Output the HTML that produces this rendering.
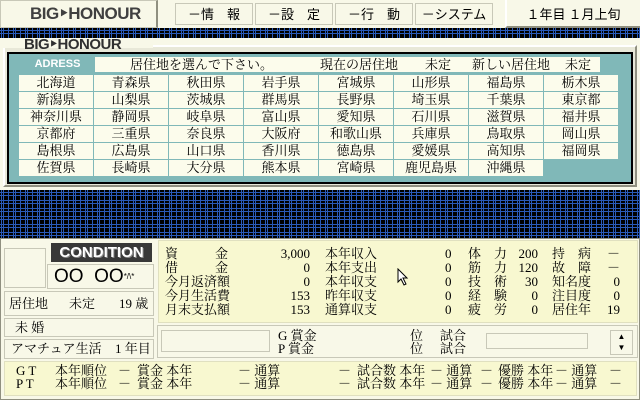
<!DOCTYPE html><html><head><meta charset="utf-8"><style>
*{margin:0;padding:0;box-sizing:border-box}
body{width:640px;height:400px;overflow:hidden;background:#f8f8e8;font-family:"Liberation Serif","Noto Serif CJK SC","Noto Sans CJK JP",serif;font-size:13px;color:#000;position:relative}
.a{position:absolute}
.btn{position:absolute;border:1px solid #c8c8b8;background:#f8f8e8;font-family:"Noto Sans CJK JP",sans-serif;font-size:13px;line-height:20px;text-align:center}
.logo{font-family:"Liberation Sans",sans-serif;font-weight:bold;color:#404040;letter-spacing:-0.5px}
.cell{position:absolute;width:74px;height:16px;background:#fcfcec;text-align:center;line-height:16px;font-size:13px}
.row{position:absolute;line-height:14px;font-size:13px;white-space:nowrap}
.r{text-align:right}
.box{position:absolute;border:1px solid #c8c8b8}
</style></head><body>
<svg width="0" height="0" style="position:absolute"><defs><pattern id="p" width="12" height="8" patternUnits="userSpaceOnUse"><rect width="12" height="8" fill="#000"/><path d="M1.5 0V8M3.5 0V8M8.5 0V8M0 2.5H12M0 5.5H12" stroke="#2a5ab8" stroke-width="1"/></pattern></defs></svg>
<svg class="a" style="left:0;top:28px" width="640" height="10"><rect width="640" height="10" fill="url(#p)"/></svg>
<svg class="a" style="left:0;top:190px" width="640" height="48"><rect width="640" height="48" fill="url(#p)"/></svg>
<!-- top bar -->
<div class="a" style="left:0;top:0;width:158px;height:28px;border:1px solid #c8c8b8;border-right:2px solid #909080"></div>
<div class="a logo" style="left:30px;top:4px;font-size:17px">BIG‣HONOUR</div>
<div class="btn" style="left:175px;top:3px;width:78px">－情　報</div>
<div class="btn" style="left:255px;top:3px;width:78px">－設　定</div>
<div class="btn" style="left:335px;top:3px;width:78px">－行　動</div>
<div class="btn" style="left:415px;top:3px;width:78px">－システム</div>
<div class="a" style="left:505px;top:0;width:135px;height:28px;border-left:2px solid #fff;border-bottom:2px solid #909080;font-size:13px;line-height:28px;text-align:center;font-family:'Noto Sans CJK JP',sans-serif">１年目 １月上旬</div>
<!-- dialog -->
<div class="a" style="left:0;top:38px;width:640px;height:152px;background:#f8f8e8"></div>
<div class="a" style="left:3px;top:45px;width:634px;height:142px;border:2px solid #909080;border-top-color:#fff;border-left-color:#fff;background:#e8e8d8"></div>
<div class="a" style="left:3px;top:38px;width:150px;height:10px;background:#f8f8e8"></div>
<div class="a logo" style="left:24px;top:37px;font-size:15px;color:#303030;line-height:16px">BIG‣HONOUR</div>
<div class="a" style="left:7px;top:52px;width:626px;height:132px;border:2px solid #000;background:#80b8b8"></div>
<div class="a" style="left:20px;top:57px;width:75px;height:15px;color:#fff;font-family:'Liberation Sans',sans-serif;font-weight:bold;font-size:11px;line-height:15px;text-align:center">ADRESS</div>
<div class="a" style="left:95px;top:57px;width:505px;height:15px;background:#fcfcec;line-height:15px;font-size:13px">
<span class="a" style="left:35px">居住地を選んで下さい。</span><span class="a" style="left:225px">現在の居住地</span><span class="a" style="left:330px">未定</span><span class="a" style="left:377px">新しい居住地</span><span class="a" style="left:470px">未定</span></div>
<div class="a" style="left:19px;top:75px">
<div class="cell" style="left:0;top:0">北海道</div><div class="cell" style="left:75px;top:0">青森県</div><div class="cell" style="left:150px;top:0">秋田県</div><div class="cell" style="left:225px;top:0">岩手県</div><div class="cell" style="left:300px;top:0">宮城県</div><div class="cell" style="left:375px;top:0">山形県</div><div class="cell" style="left:450px;top:0">福島県</div><div class="cell" style="left:525px;top:0">栃木県</div>
<div class="cell" style="left:0;top:17px">新潟県</div><div class="cell" style="left:75px;top:17px">山梨県</div><div class="cell" style="left:150px;top:17px">茨城県</div><div class="cell" style="left:225px;top:17px">群馬県</div><div class="cell" style="left:300px;top:17px">長野県</div><div class="cell" style="left:375px;top:17px">埼玉県</div><div class="cell" style="left:450px;top:17px">千葉県</div><div class="cell" style="left:525px;top:17px">東京都</div>
<div class="cell" style="left:0;top:34px">神奈川県</div><div class="cell" style="left:75px;top:34px">静岡県</div><div class="cell" style="left:150px;top:34px">岐阜県</div><div class="cell" style="left:225px;top:34px">富山県</div><div class="cell" style="left:300px;top:34px">愛知県</div><div class="cell" style="left:375px;top:34px">石川県</div><div class="cell" style="left:450px;top:34px">滋賀県</div><div class="cell" style="left:525px;top:34px">福井県</div>
<div class="cell" style="left:0;top:51px">京都府</div><div class="cell" style="left:75px;top:51px">三重県</div><div class="cell" style="left:150px;top:51px">奈良県</div><div class="cell" style="left:225px;top:51px">大阪府</div><div class="cell" style="left:300px;top:51px">和歌山県</div><div class="cell" style="left:375px;top:51px">兵庫県</div><div class="cell" style="left:450px;top:51px">鳥取県</div><div class="cell" style="left:525px;top:51px">岡山県</div>
<div class="cell" style="left:0;top:68px">島根県</div><div class="cell" style="left:75px;top:68px">広島県</div><div class="cell" style="left:150px;top:68px">山口県</div><div class="cell" style="left:225px;top:68px">香川県</div><div class="cell" style="left:300px;top:68px">徳島県</div><div class="cell" style="left:375px;top:68px">愛媛県</div><div class="cell" style="left:450px;top:68px">高知県</div><div class="cell" style="left:525px;top:68px">福岡県</div>
<div class="cell" style="left:0;top:85px">佐賀県</div><div class="cell" style="left:75px;top:85px">長崎県</div><div class="cell" style="left:150px;top:85px">大分県</div><div class="cell" style="left:225px;top:85px">熊本県</div><div class="cell" style="left:300px;top:85px">宮崎県</div><div class="cell" style="left:375px;top:85px">鹿児島県</div><div class="cell" style="left:450px;top:85px">沖縄県</div>
</div>
<!-- bottom -->
<div class="a" style="left:0;top:238px;width:640px;height:162px;background:#f8f8e8;border:1px solid #909080"></div>
<div class="box" style="left:4px;top:248px;width:42px;height:40px"></div>
<div class="a" style="left:51px;top:243px;width:101px;height:19px;background:#383838;color:#fff;font-family:'Liberation Sans',sans-serif;font-weight:bold;font-size:15px;line-height:19px;text-align:center;text-shadow:1px 1px 0 #888">CONDITION</div>
<div class="box" style="left:47px;top:264px;width:107px;height:25px;font-family:'Liberation Sans',sans-serif;font-size:19px;line-height:23px;padding-left:6px">OO&nbsp;&nbsp;OO<span style="font-size:8px;vertical-align:top">*/\*</span></div>
<div class="box" style="left:4px;top:291px;width:150px;height:25px;line-height:23px;padding-left:4px">居住地<span class="a" style="left:64px">未定</span><span class="a" style="left:114px">19 歳</span></div>
<div class="box" style="left:4px;top:318px;width:150px;height:19px;line-height:17px;padding-left:10px">未 婚</div>
<div class="box" style="left:4px;top:339px;width:150px;height:20px;line-height:18px;padding-left:6px">アマチュア生活<span class="a" style="left:110px">1 年目</span></div>
<div class="a" style="left:158px;top:240px;width:480px;height:83px;background:#f8f8d0;border:1px solid #e0e0c0"></div>
<div class="a" style="left:165px;top:247px;width:470px">
<div class="row" style="top:0">資<span class="a" style="left:50px">金</span></div>
<div class="row" style="top:14px">借<span class="a" style="left:50px">金</span></div>
<div class="row" style="top:28px">今月返済額</div><div class="row" style="top:42px">今月生活費</div><div class="row" style="top:56px">月末支払額</div>
<div class="row r" style="left:90px;width:55px;top:0">3,000</div><div class="row r" style="left:90px;width:55px;top:14px">0</div><div class="row r" style="left:90px;width:55px;top:28px">0</div><div class="row r" style="left:90px;width:55px;top:42px">153</div><div class="row r" style="left:90px;width:55px;top:56px">153</div>
<div class="row" style="left:160px;top:0">本年収入</div><div class="row" style="left:160px;top:14px">本年支出</div><div class="row" style="left:160px;top:28px">本年収支</div><div class="row" style="left:160px;top:42px">昨年収支</div><div class="row" style="left:160px;top:56px">通算収支</div>
<div class="row" style="left:280px;top:0">0</div><div class="row" style="left:280px;top:14px">0</div><div class="row" style="left:280px;top:28px">0</div><div class="row" style="left:280px;top:42px">0</div><div class="row" style="left:280px;top:56px">0</div>
<div class="row" style="left:303px;top:0">体　力</div><div class="row" style="left:303px;top:14px">筋　力</div><div class="row" style="left:303px;top:28px">技　術</div><div class="row" style="left:303px;top:42px">経　験</div><div class="row" style="left:303px;top:56px">疲　労</div>
<div class="row r" style="left:340px;width:33px;top:0">200</div><div class="row r" style="left:340px;width:33px;top:14px">120</div><div class="row r" style="left:340px;width:33px;top:28px">30</div><div class="row r" style="left:340px;width:33px;top:42px">0</div><div class="row r" style="left:340px;width:33px;top:56px">0</div>
<div class="row" style="left:387px;top:0">持　病</div><div class="row" style="left:387px;top:14px">故　障</div><div class="row" style="left:387px;top:28px">知名度</div><div class="row" style="left:387px;top:42px">注目度</div><div class="row" style="left:387px;top:56px">居住年</div>
<div class="row r" style="left:425px;width:30px;top:0">－</div><div class="row r" style="left:425px;width:30px;top:14px">－</div><div class="row r" style="left:425px;width:30px;top:28px">0</div><div class="row r" style="left:425px;width:30px;top:42px">0</div><div class="row r" style="left:425px;width:30px;top:56px">19</div>
</div>
<svg class="a" style="left:397px;top:268px" width="12" height="18"><path d="M1 1V14L4 11L7 17L9 16L6 10H10Z" fill="#fff" stroke="#000"/></svg>
<div class="box" style="left:157px;top:325px;width:481px;height:33px"></div>
<div class="box" style="left:161px;top:330px;width:109px;height:22px"></div>
<div class="row" style="left:278px;top:329px">G 賞金</div><div class="row" style="left:278px;top:342px">P 賞金</div>
<div class="row" style="left:410px;top:329px">位</div><div class="row" style="left:410px;top:342px">位</div>
<div class="row" style="left:440px;top:329px">試合</div><div class="row" style="left:440px;top:342px">試合</div>
<div class="box" style="left:486px;top:333px;width:102px;height:16px"></div>
<div class="box" style="left:610px;top:330px;width:23px;height:25px;font-size:8px;line-height:11px;text-align:center">▲<br>▼</div>
<div class="a" style="left:4px;top:361px;width:633px;height:35px;background:#f8f8d0;border:1px solid #e0e0c0"></div>
<div class="a" style="left:0;top:364px;width:640px;height:28px">
<div class="row" style="left:16px;top:0">G T</div><div class="row" style="left:16px;top:13px">P T</div>
<div class="row" style="left:55px;top:0">本年順位</div><div class="row" style="left:55px;top:13px">本年順位</div>
<div class="row" style="left:118px;top:0">－</div><div class="row" style="left:118px;top:13px">－</div>
<div class="row" style="left:137px;top:0">賞金 本年</div><div class="row" style="left:137px;top:13px">賞金 本年</div>
<div class="row" style="left:238px;top:0">－ 通算</div><div class="row" style="left:238px;top:13px">－ 通算</div>
<div class="row" style="left:338px;top:0">－</div><div class="row" style="left:338px;top:13px">－</div>
<div class="row" style="left:357px;top:0">試合数 本年</div><div class="row" style="left:357px;top:13px">試合数 本年</div>
<div class="row" style="left:430px;top:0">－ 通算</div><div class="row" style="left:430px;top:13px">－ 通算</div>
<div class="row" style="left:480px;top:0">－</div><div class="row" style="left:480px;top:13px">－</div>
<div class="row" style="left:498px;top:0">優勝 本年</div><div class="row" style="left:498px;top:13px">優勝 本年</div>
<div class="row" style="left:555px;top:0">－ 通算</div><div class="row" style="left:555px;top:13px">－ 通算</div>
<div class="row" style="left:609px;top:0">－</div><div class="row" style="left:609px;top:13px">－</div>
</div>
</body></html>
